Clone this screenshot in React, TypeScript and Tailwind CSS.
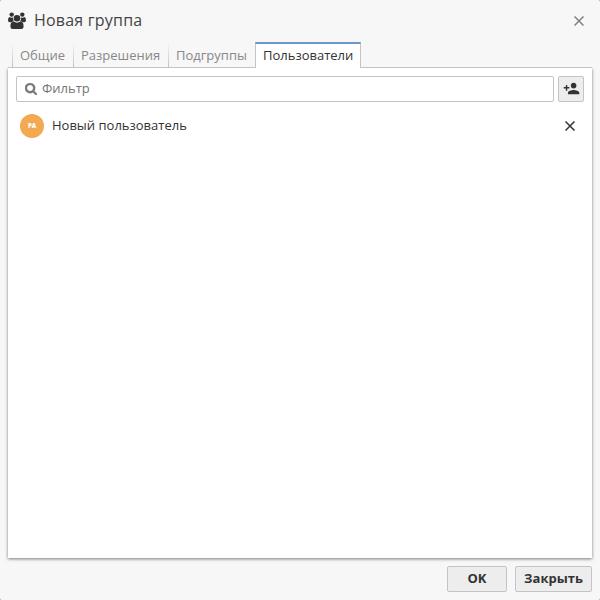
import type { ReactNode } from "react";
import { MdPersonAdd } from "react-icons/md";

const tabs = [
  { label: "Общие", width: "w-[61px]" },
  { label: "Разрешения", width: "w-[95px]" },
  { label: "Подгруппы", width: "w-[87px]" },
  { label: "Пользователи", width: "w-[106px]" },
];
const activeTab = "Пользователи";

const users = [{ initials: "PA", name: "Новый пользователь" }];

function GroupIcon() {
  return (
    <svg className="mt-px h-[17px] w-[18px]" viewBox="0 0 18 17" fill="currentColor">
      <circle cx="3.7" cy="2.6" r="2.2" />
      <circle cx="14.3" cy="2.6" r="2.2" />
      <path d="M1.3 4.9Q2.5 5.8 4 5.7L5 5.5Q4.8 8.3 6 9.2 4.300 9.200 3.200 10.300H1.800Q0 10.300 0 8.600 0 5.500 1.300 4.900z" />
      <path d="M16.700 4.900Q15.500 5.800 14 5.700L13 5.500Q13.200 8.300 12 9.200 13.700 9.200 14.800 10.300H16.200Q18 10.300 18 8.600 18 5.500 16.700 4.900z" />
      <circle cx="9" cy="6.200" r="3.300" />
      <path d="M5.600 9.600Q9 11.700 12.400 9.600 15.600 9.700 15.600 14.500 15.600 17 13.300 17H4.700Q2.400 17 2.400 14.500 2.400 9.700 5.600 9.600z" />
    </svg>
  );
}

function SearchIcon() {
  return (
    <svg className="size-3 shrink-0" viewBox="0 0 1664 1664" fill="currentColor" stroke="currentColor" strokeWidth="60">
      <path d="M1152 704q0-185-131.5-316.5T704 256 387.5 387.5 256 704t131.5 316.5T704 1152t316.5-131.5T1152 704zm512 832q0 52-38 90t-90 38q-54 0-90-38l-343-342q-179 124-399 124-143 0-273.5-55.5t-225-150-150-225T0 704t55.5-273.5 150-225 225-150T704 0t273.5 55.5 225 150 150 225T1408 704q0 220-124 399l343 343q37 37 37 90z" />
    </svg>
  );
}

function CrossIcon() {
  return (
    <svg className="size-2.5" viewBox="0 0 10 10" fill="none" stroke="currentColor" strokeWidth="1.5">
      <path d="M.5.5l9 9M9.5.5l-9 9" />
    </svg>
  );
}

function DialogButton({ width, children }: { width: string; children: ReactNode }) {
  return (
    <button
      className={`${width} h-[26px] rounded-[2px] border border-[#c4c4c4] bg-[#ededed] pb-0.5 text-[13px] font-bold leading-[22px] text-[#333]`}
    >
      {children}
    </button>
  );
}

export default function App() {
  return (
    <div className="h-[600px] w-[600px] bg-[#aaa] font-['Open_Sans',sans-serif] text-[#333]">
      <div className="flex h-full flex-col rounded-[2px] bg-[#f7f7f7] px-2">
        <header className="flex h-[42px] items-center pb-[2px]">
          <GroupIcon />
          <h1 className="ml-2 flex-1 text-base leading-5 tracking-[0.2px] text-[#444]">Новая группа</h1>
          <button className="mr-2 mt-px text-[#808080]">
            <CrossIcon />
          </button>
        </header>

        <nav className="flex h-[26px] shrink-0 items-stretch text-[13px]">
          <div className="w-1 border-b border-[#c4c4c4]" />
          {tabs.map((tab) =>
            tab.label === activeTab ? (
              <button
                key={tab.label}
                className={`${tab.width} border-x border-t-2 border-x-[#c4c4c4] border-t-[#6b98c9] bg-white pb-0.5 pl-[7px] text-left leading-[22px]`}
              >
                {tab.label}
              </button>
            ) : (
              <button
                key={tab.label}
                className={`${tab.width} flex border-b border-[#c4c4c4] text-left leading-[27px] text-[#888]`}
              >
                <span className="mr-[7px] h-full w-px bg-linear-to-b from-transparent to-[#c4c4c4]" />
                {tab.label}
              </button>
            ),
          )}
          <div className="flex-1 border-b border-[#c4c4c4]" />
        </nav>

        <main className="h-[490px] bg-white px-2 pt-2 shadow-[0_1px_3px_rgba(0,0,0,0.5)] [clip-path:inset(0_-4px_-5px_-4px)]">
          <div className="flex gap-1">
            <label className="flex h-[26px] flex-1 items-center rounded-[2px] border border-[#c4c4c4] pl-2 text-[#757575]">
              <SearchIcon />
              <input
                className="mb-0.5 ml-[5px] h-5 min-w-0 flex-1 text-[13px] outline-none placeholder:text-[#757575]"
                placeholder="Фильтр"
              />
            </label>
            <button className="flex size-[26px] items-center justify-center rounded-[2px] border border-[#c4c4c4] bg-[#ededed] pb-px">
              <MdPersonAdd className="size-[17px]" />
            </button>
          </div>

          <ul>
            {users.map((user) => (
              <li key={user.name} className="mt-2 flex h-8 items-center px-1">
                <span className="flex size-6 items-center justify-center rounded-full bg-[#f2a952] text-[6px] font-extrabold text-white">
                  {user.initials}
                </span>
                <span className="mb-0.5 ml-2 flex-1 text-[13px] leading-5">{user.name}</span>
                <button className="mr-[5px]">
                  <CrossIcon />
                </button>
              </li>
            ))}
          </ul>
        </main>

        <footer className="mt-2 flex justify-end gap-2">
          <DialogButton width="w-[60px]">OK</DialogButton>
          <DialogButton width="w-[77px]">Закрыть</DialogButton>
        </footer>
      </div>
    </div>
  );
}
